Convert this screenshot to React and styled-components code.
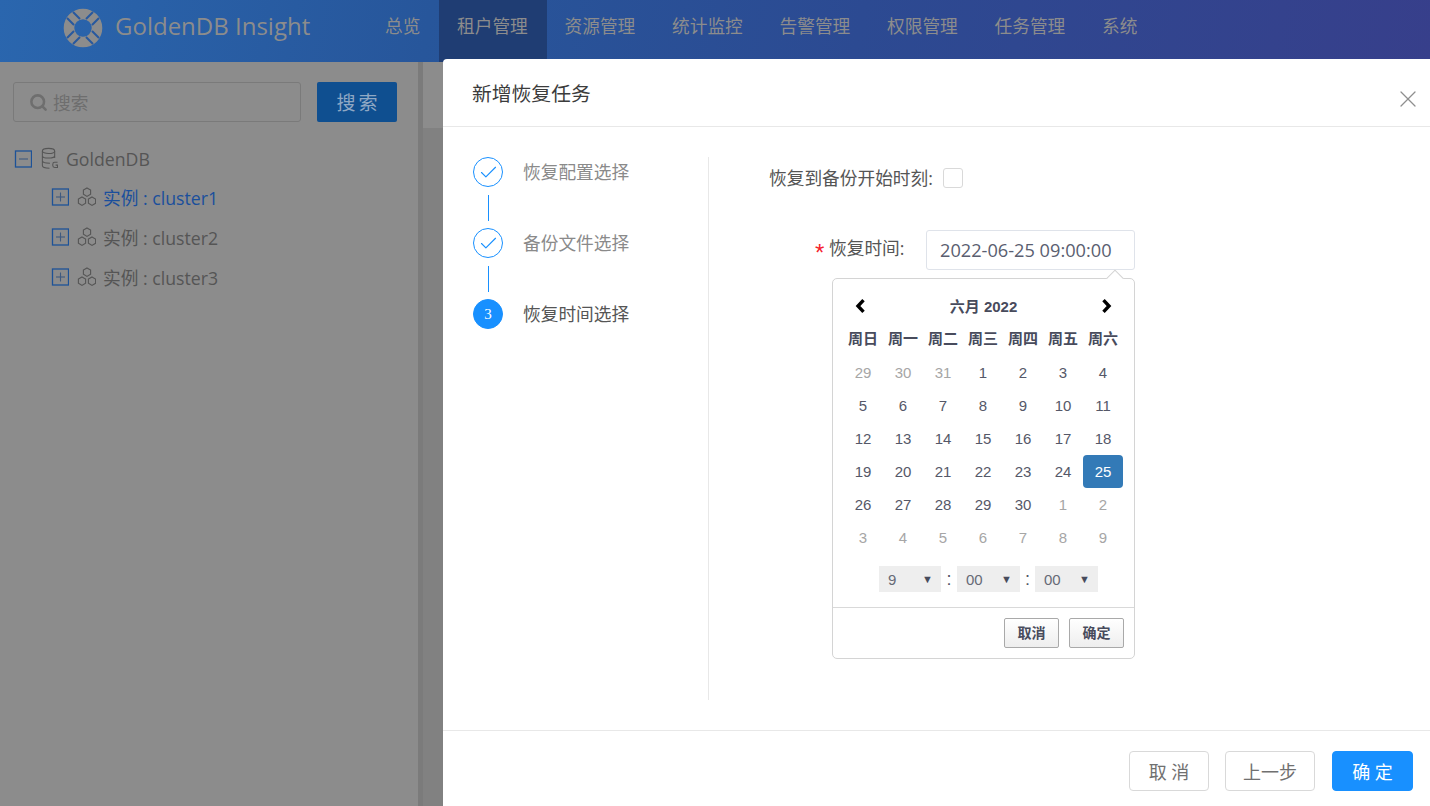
import React from "react"
import styled, { createGlobalStyle } from "styled-components"
import { Check, X, Search } from "lucide-react"

const NAV = ["总览", "租户管理", "资源管理", "统计监控", "告警管理", "权限管理", "任务管理", "系统"]
const CLUSTERS = ["cluster1", "cluster2", "cluster3"]
const WEEK = ["周日", "周一", "周二", "周三", "周四", "周五", "周六"]
const DAYS = [
    [29, 30, 31, 1, 2, 3, 4],
    [5, 6, 7, 8, 9, 10, 11],
    [12, 13, 14, 15, 16, 17, 18],
    [19, 20, 21, 22, 23, 24, 25],
    [26, 27, 28, 29, 30, 1, 2],
    [3, 4, 5, 6, 7, 8, 9],
]

const isMuted = (row, day) => (row === 0 && day > 20) || (row >= 4 && day < 20)

const Logo = () => (
    <svg width="40" height="40" viewBox="0 0 40 40">
        <circle cx="20" cy="20" r="14" fill="none" stroke="#8c8c8c" strokeWidth="10.6" />
        <g stroke="#27589f" strokeWidth="2">
            <path d="M10 4 L17 11 M4 10 L11 17" />
            <path d="M30 4 L23 11 M36 10 L29 17" />
            <path d="M10 36 L17 29 M4 30 L11 23" />
            <path d="M30 36 L23 29 M36 30 L29 23" />
        </g>
    </svg>
)

const ToggleBox = ({ open }) => (
    <svg width="18" height="18" viewBox="0 0 18 18" fill="none" stroke="#1d5297" strokeWidth="1.3">
        <rect x="1.5" y="1" width="16" height="16" />
        <path d="M5 9 H14" stroke="#3f5a80" strokeWidth="1.1" />
        {!open && <path d="M9.5 4.5 V13.5" stroke="#3f5a80" strokeWidth="1.1" />}
    </svg>
)

const DbIcon = () => (
    <svg width="18" height="23" viewBox="-1 0 19 23" fill="none" stroke="#555" strokeWidth="1.1">
        <ellipse cx="8" cy="3.5" rx="6.5" ry="2.7" />
        <path d="M1.5 3.5 V19 C1.5 20.8 4 21.8 9 21.8 M14.5 3.5 V11 M1.5 8.5 C1.5 10 4 11 8 11 C11 11 14.5 10 14.5 8.5 M1.5 14 C1.5 15.5 4 16.5 9.5 16.5" />
        <path d="M17.5 15.5 H14.5 C13.2 15.5 12.5 16.2 12.5 17.5 V19 C12.5 20.3 13.2 21 14.5 21 H17.5 V18.5 H15.5" />
    </svg>
)

const ClusterIcon = () => (
    <svg width="20" height="20" viewBox="-1 0 20 20" fill="none" stroke="#555" strokeWidth="1.1">
        <path d="M10 1 L13.6 3.1 V7.3 L10 9.4 L6.4 7.3 V3.1 Z" />
        <path d="M5 10 L8.6 12.1 V16.3 L5 18.4 L1.4 16.3 V12.1 Z" />
        <path d="M15 10 L18.6 12.1 V16.3 L15 18.4 L11.4 16.3 V12.1 Z" />
    </svg>
)

const MonthArrow = ({ dir }) => (
    <svg width="11" height="14" viewBox="0 0 11 14" fill="none" stroke="#000" strokeWidth="3.4">
        <path d={dir === "left" ? "M8.5 1.2 L3 7 L8.5 12.8" : "M2.5 1.2 L8 7 L2.5 12.8"} />
    </svg>
)

export default function App() {
    return (
        <Page>
            <GlobalStyle />
            <Header>
                <Brand>
                    <Logo />
                    <BrandName>GoldenDB Insight</BrandName>
                </Brand>
                <Nav>
                    {NAV.map((n) => (
                        <NavItem key={n} $wide={n.length > 2} $active={n === "租户管理"}>{n}</NavItem>
                    ))}
                </Nav>
            </Header>
            <Body>
                <Sidebar>
                    <SearchRow>
                        <SearchInput>
                            <Search size={19} color="#6e6e6e" strokeWidth={3.2} />
                            <span>搜索</span>
                        </SearchInput>
                        <SearchButton>搜索</SearchButton>
                    </SearchRow>
                    <Tree>
                        <RootRow>
                            <ToggleBox open />
                            <DbIcon />
                            <span>GoldenDB</span>
                        </RootRow>
                        {CLUSTERS.map((c, i) => (
                            <TreeRow key={c} $active={i === 0}>
                                <ToggleBox />
                                <ClusterIcon />
                                <span>实例 : {c}</span>
                            </TreeRow>
                        ))}
                    </Tree>
                </Sidebar>
                <Gutter />
                <Content>
                    <ContentTop />
                </Content>
            </Body>

            <Modal>
                <ModalHead>
                    <ModalTitle>新增恢复任务</ModalTitle>
                    <CloseBtn><X size={28} strokeWidth={1.1} /></CloseBtn>
                </ModalHead>
                <ModalBody>
                    <Steps>
                        <Step>
                            <StepDot><Check size={21} strokeWidth={1.3} /></StepDot>
                            <StepLabel>恢复配置选择</StepLabel>
                        </Step>
                        <StepLine />
                        <Step>
                            <StepDot><Check size={21} strokeWidth={1.3} /></StepDot>
                            <StepLabel>备份文件选择</StepLabel>
                        </Step>
                        <StepLine />
                        <Step>
                            <StepDot $current>3</StepDot>
                            <StepLabel $current>恢复时间选择</StepLabel>
                        </Step>
                    </Steps>
                    <Form>
                        <CheckRow>
                            <CheckText>恢复到备份开始时刻:</CheckText>
                            <CheckBox />
                        </CheckRow>
                        <TimeRow>
                            <Required>*</Required>
                            <TimeLabel>恢复时间:</TimeLabel>
                            <DateField>
                                <DateInput>2022-06-25 09:00:00</DateInput>
                                <Picker>
                                    <PickerArrow />
                                    <MonthBar>
                                        <MonthArrow dir="left" />
                                        <MonthName>六月 2022</MonthName>
                                        <MonthArrow dir="right" />
                                    </MonthBar>
                                    <DayGrid>
                                        {WEEK.map((w) => <WeekCell key={w}>{w}</WeekCell>)}
                                        {DAYS.map((row, r) =>
                                            row.map((d) => (
                                                <DayCell
                                                    key={`${r}-${d}`}
                                                    $muted={isMuted(r, d)}
                                                    $selected={r === 3 && d === 25}
                                                >
                                                    {d}
                                                </DayCell>
                                            ))
                                        )}
                                    </DayGrid>
                                    <TimeBar>
                                        <TimeSelect $w={62}>9<Caret>▼</Caret></TimeSelect>
                                        <Colon>:</Colon>
                                        <TimeSelect $w={63}>00<Caret>▼</Caret></TimeSelect>
                                        <Colon $narrow>:</Colon>
                                        <TimeSelect $w={63}>00<Caret>▼</Caret></TimeSelect>
                                    </TimeBar>
                                    <PickerFoot>
                                        <PickerBtn>取消</PickerBtn>
                                        <PickerBtn>确定</PickerBtn>
                                    </PickerFoot>
                                </Picker>
                            </DateField>
                        </TimeRow>
                    </Form>
                </ModalBody>
                <ModalFoot>
                    <FootBtn $w={80}>取 消</FootBtn>
                    <FootBtn $w={90}>上一步</FootBtn>
                    <FootBtn $w={81} $primary>确 定</FootBtn>
                </ModalFoot>
            </Modal>
        </Page>
    )
}

const GlobalStyle = createGlobalStyle`
    html, body {
        margin: 0;
        padding: 0;
        height: 100%;
        overflow: hidden;
    }
    * {
        box-sizing: border-box;
    }
    body {
        font-family: "Open Sans", "Noto Sans CJK SC", sans-serif;
        font-size: 17.7px;
    }
`

const Page = styled.div`
    position: relative;
    width: 1430px;
    height: 806px;
    display: flex;
    flex-direction: column;
    background: #8c8c8c;
    overflow: hidden;
`

const Header = styled.header`
    height: 62px;
    flex: none;
    display: flex;
    background: linear-gradient(100deg, #2a66ae 0%, #27569b 30%, #2c4a92 60%, #373f8b 100%);
`

const Brand = styled.div`
    width: 367px;
    padding: 5px 0 12px 63px;
    display: flex;
    align-items: center;
    gap: 12px;
`

const BrandName = styled.span`
    padding-bottom: 3px;
    font-size: 24px;
    color: #8c8c8c;
    white-space: nowrap;
    line-height: 1;
`

const Nav = styled.nav`
    display: flex;
    height: 100%;
`

const NavItem = styled.div`
    padding: 0 18px 12px;
    display: flex;
    align-items: center;
    color: #8c8c8c;
    width: ${(p) => (p.$wide ? "107.5px" : "72px")};
    background: ${(p) => (p.$active ? "#1f3d73" : "transparent")};
    white-space: nowrap;
`

const Body = styled.div`
    flex: 1;
    display: flex;
    min-height: 0;
`

const Sidebar = styled.aside`
    width: 418px;
    flex: none;
    padding: 20px 21px 0 13px;
`

const SearchRow = styled.div`
    display: flex;
    gap: 16px;
`

const SearchInput = styled.div`
    flex: 1;
    height: 40px;
    display: flex;
    align-items: center;
    gap: 5px;
    padding-left: 15px;
    border: 1px solid #7a7a7a;
    border-radius: 3px;
    color: #6e6e6e;
`

const SearchButton = styled.button`
    width: 80px;
    height: 40px;
    padding: 0 0 0 3px;
    border: 0;
    border-radius: 2px;
    background: #0f4f90;
    color: #8fa8c4;
    font-family: inherit;
    font-size: 19px;
    letter-spacing: 3px;
`

const Tree = styled.div`
    margin-top: 18px;
    display: flex;
    flex-direction: column;
    color: #555;
`

const RootRow = styled.div`
    height: 37px;
    padding-left: 1px;
    display: flex;
    align-items: center;
    gap: 8px;
`

const TreeRow = styled.div`
    height: 40px;
    padding-left: 38px;
    display: flex;
    align-items: center;
    gap: 7px;
    color: ${(p) => (p.$active ? "#1a4f9c" : "#555")};
`

const Gutter = styled.div`
    width: 5px;
    flex: none;
    background: #7b7b7b;
`

const Content = styled.main`
    flex: 1;
    background: #818181;
`

const ContentTop = styled.div`
    height: 66px;
    background: #8c8c8c;
`

const Modal = styled.section`
    position: absolute;
    left: 443px;
    top: 59px;
    right: 0;
    bottom: 0;
    display: flex;
    flex-direction: column;
    background: #fff;
    border-top-left-radius: 4px;
    color: #555;
`

const ModalHead = styled.div`
    position: relative;
    height: 68px;
    flex: none;
    display: flex;
    align-items: center;
    padding-left: 29px;
    border-bottom: 1px solid #e8e8e8;
`

const ModalTitle = styled.h2`
    margin: 0;
    font-size: 19.8px;
    font-weight: 400;
    color: #3c3c3c;
`

const CloseBtn = styled.span`
    position: absolute;
    right: 8px;
    top: 26px;
    display: flex;
    color: #8f8f8f;
`

const ModalBody = styled.div`
    flex: 1;
    min-height: 0;
    display: flex;
    padding: 30px 0 30px 30px;
`

const Steps = styled.div`
    width: 236px;
    flex: none;
    border-right: 1px solid #e8e8e8;
    display: flex;
    flex-direction: column;
`

const Step = styled.div`
    display: flex;
    align-items: center;
    gap: 20px;
    height: 30px;
`

const StepDot = styled.div`
    width: 30px;
    height: 30px;
    flex: none;
    border-radius: 50%;
    border: 1px solid #1890ff;
    display: flex;
    align-items: center;
    justify-content: center;
    font-family: "Liberation Serif", serif;
    font-size: 15px;
    color: ${(p) => (p.$current ? "#fff" : "#1890ff")};
    background: ${(p) => (p.$current ? "#1890ff" : "#fff")};
`

const StepLabel = styled.span`
    padding-bottom: 2px;
    white-space: nowrap;
    color: ${(p) => (p.$current ? "#555" : "#8a8a8a")};
`

const StepLine = styled.div`
    width: 1px;
    height: 26px;
    margin: 8px 0 7px 15px;
    background: #1890ff;
`

const Form = styled.div`
    flex: 1;
    padding-left: 60px;
`

const CheckRow = styled.div`
    display: flex;
    align-items: center;
    gap: 10px;
    height: 22px;
    margin-top: 10px;
    color: #555;
`

const CheckText = styled.span`
    padding-bottom: 2px;
`

const CheckBox = styled.span`
    width: 20px;
    height: 20px;
    border: 1px solid #d9d9d9;
    border-radius: 3px;
`

const TimeRow = styled.div`
    display: flex;
    align-items: flex-start;
    margin-top: 41px;
    padding-left: 46px;
`

const Required = styled.span`
    width: 14px;
    font-family: "Liberation Sans", sans-serif;
    font-size: 24px;
    line-height: 46px;
    color: #f5222d;
`

const TimeLabel = styled.span`
    width: 97px;
    line-height: 36px;
    color: #555;
`

const DateField = styled.div`
    position: relative;
    width: 209px;
`

const DateInput = styled.div`
    height: 40px;
    padding-left: 13px;
    display: flex;
    align-items: center;
    border: 1px solid #dfe3ea;
    border-radius: 3px;
    font-size: 18.2px;
    color: #5a5e70;
    white-space: nowrap;
`

const Picker = styled.div`
    position: absolute;
    right: 0;
    top: 48px;
    width: 303px;
    height: 381px;
    display: flex;
    flex-direction: column;
    background: #fff;
    border: 1px solid #d4d4d4;
    border-radius: 5px;
    font-family: "Liberation Sans", "Noto Sans CJK SC", sans-serif;
    font-size: 15px;
    color: #555868;
`

const PickerArrow = styled.span`
    position: absolute;
    right: 13px;
    top: -7px;
    width: 12px;
    height: 12px;
    transform: rotate(45deg);
    background: #fff;
    border-left: 1px solid #d4d4d4;
    border-top: 1px solid #d4d4d4;
`

const MonthBar = styled.div`
    height: 44px;
    padding: 10px 22px 0 22px;
    display: flex;
    align-items: center;
    justify-content: space-between;
`

const MonthName = styled.span`
    padding-bottom: 2px;
    font-weight: 700;
    font-size: 15px;
    color: #484b5c;
`

const DayGrid = styled.div`
    margin: 0 11px 0 10px;
    display: grid;
    grid-template-columns: repeat(7, 40px);
    grid-auto-rows: 33px;
`

const WeekCell = styled.div`
    padding-bottom: 4px;
    display: flex;
    align-items: center;
    justify-content: center;
    font-weight: 700;
    color: #484b5c;
`

const DayCell = styled.div`
    display: flex;
    align-items: center;
    justify-content: center;
    border-radius: 4px;
    color: ${(p) => (p.$selected ? "#fff" : p.$muted ? "#a6a6a6" : "#555868")};
    background: ${(p) => (p.$selected ? "#337ab7" : "transparent")};
`

const TimeBar = styled.div`
    margin-top: 12px;
    padding-left: 46px;
    display: flex;
    align-items: center;
`

const TimeSelect = styled.div`
    width: ${(p) => p.$w}px;
    height: 26px;
    padding: 0 8px 0 9px;
    display: flex;
    align-items: center;
    justify-content: space-between;
    background: #eee;
    color: #666a76;
`

const Caret = styled.span`
    font-size: 11px;
    color: #484b5c;
`

const Colon = styled.span`
    width: ${(p) => (p.$narrow ? 15 : 16)}px;
    text-align: center;
    font-size: 18px;
    line-height: 1;
`

const PickerFoot = styled.div`
    margin-top: 15px;
    flex: 1;
    padding: 10px 10px 0 0;
    border-top: 1px solid #d9d9d9;
    display: flex;
    justify-content: flex-end;
    gap: 10px;
`

const PickerBtn = styled.button`
    width: 55px;
    height: 30px;
    padding: 0 0 2px;
    border: 1px solid #a9a9a9;
    border-radius: 2px;
    background: linear-gradient(#fff, #eee);
    font-family: inherit;
    font-size: 14px;
    font-weight: 700;
    color: #484b5c;
`

const ModalFoot = styled.div`
    height: 76px;
    flex: none;
    padding: 20px 17px 0 0;
    display: flex;
    justify-content: flex-end;
    gap: 16px;
    border-top: 1px solid #e8e8e8;
`

const FootBtn = styled.button`
    width: ${(p) => p.$w}px;
    height: 40px;
    padding: 0;
    margin-left: ${(p) => (p.$primary ? "1px" : "0")};
    border-radius: 4px;
    border: 1px solid ${(p) => (p.$primary ? "#1890ff" : "#d9d9d9")};
    background: ${(p) => (p.$primary ? "#1890ff" : "#fff")};
    color: ${(p) => (p.$primary ? "#fff" : "#707070")};
    font-family: inherit;
    font-size: 18px;
`
